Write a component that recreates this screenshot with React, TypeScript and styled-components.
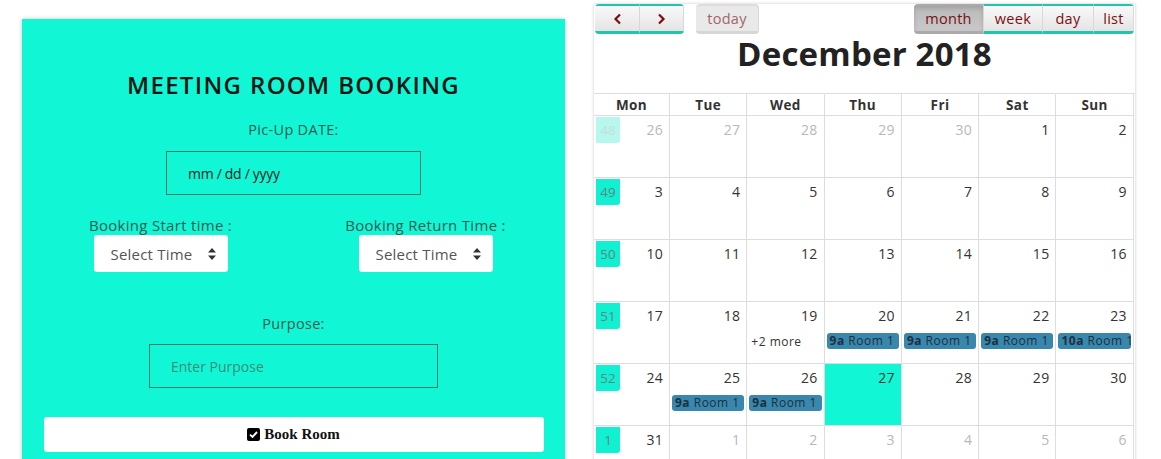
import React from "react";
import styled, { createGlobalStyle } from "styled-components";

const Global = createGlobalStyle`
  html, body { margin: 0; padding: 0; background: #fff; overflow: hidden; }
  body { font-family: "Open Sans", "DejaVu Sans", sans-serif; }
  * { box-sizing: border-box; }
`;

const Page = styled.div`
  display: flex;
  align-items: flex-start;
  width: 1161px;
  height: 459px;
  overflow: hidden;
`;

const Card = styled.div`
  margin: 19px 0 0 22px;
  width: 543px;
  height: 470px;
  background: #11f7d5;
  box-shadow: 0 0 4px rgba(0, 0, 0, 0.25);
  display: flex;
  flex-direction: column;
  align-items: center;
  padding-top: 51px;
`;

const Title = styled.h1`
  margin: 0;
  font-size: 24px;
  font-weight: 600;
  letter-spacing: 1.35px;
  color: #0b1512;
  line-height: 30px;
`;

const Label = styled.div<{ $mt: number }>`
  margin-top: ${(p) => p.$mt}px;
  font-size: 14.5px;
  color: #2a5b53;
  line-height: 20px;
  letter-spacing: 0.3px;
`;

const TextBox = styled.div<{ $w: number; $mt: number; $placeholder?: boolean }>`
  margin-top: ${(p) => p.$mt}px;
  width: ${(p) => p.$w}px;
  height: 44px;
  border: 1px solid #2b7a6c;
  display: flex;
  align-items: center;
  padding-left: 21px;
  font-size: 14px;
  color: ${(p) => (p.$placeholder ? "#3b8c7d" : "#1d2522")};
  letter-spacing: ${(p) => (p.$placeholder ? "0" : "-0.3px")};
`;

const TimeRow = styled.div`
  margin-top: 20px;
  width: 100%;
  display: grid;
  grid-template-columns: 265px 265px;
  padding-left: 6px;
`;

const TimeCol = styled.div`
  display: flex;
  flex-direction: column;
  align-items: center;
`;

const TimeLabel = styled.div`
  font-size: 15px;
  color: #2a5b53;
  line-height: 20px;
  letter-spacing: 0.3px;
`;

const Select = styled.div`
  margin-top: 0;
  width: 134px;
  height: 37px;
  background: #fff;
  border-radius: 3px;
  display: flex;
  align-items: center;
  justify-content: space-between;
  padding: 0 12px 0 17px;
  font-size: 15px;
  color: #555;
  letter-spacing: 0.2px;
`;

const Arrows = styled.svg`
  width: 8px;
  height: 12px;
`;

const BookButton = styled.div`
  margin-top: 29px;
  width: 500px;
  height: 35px;
  background: #fff;
  border-radius: 3px;
  display: flex;
  align-items: center;
  justify-content: center;
  gap: 4px;
  font-family: "Liberation Serif", "Times New Roman", serif;
  font-weight: 700;
  font-size: 15px;
  color: #111;
`;

/* Calendar */

const Calendar = styled.div`
  margin: 4px 0 0 29px;
  width: 541px;
  height: 470px;
  box-shadow: 0 0 3px rgba(0, 0, 0, 0.22);
  display: flex;
  flex-direction: column;
`;

const Toolbar = styled.div`
  display: flex;
  justify-content: space-between;
  align-items: flex-start;
  padding: 0 1px;
  height: 30px;
`;

const ToolLeft = styled.div`
  display: flex;
  gap: 12px;
`;

const Group = styled.div`
  display: flex;
  border-radius: 4px;
  overflow: hidden;
`;

const Btn = styled.div<{ $w: number; $active?: boolean; $teal?: boolean; $disabled?: boolean }>`
  width: ${(p) => p.$w}px;
  height: 30px;
  display: flex;
  align-items: center;
  justify-content: center;
  font-size: 14.5px;
  letter-spacing: 0.3px;
  color: ${(p) => (p.$disabled ? "#a0666a" : "#7a0f12")};
  background: ${(p) =>
    p.$active
      ? "linear-gradient(#b9b9b9, #c9c9c9)"
      : p.$disabled
      ? "#e9e9e9"
      : "linear-gradient(#f9f9f9, #e4e4e4)"};
  border-top: 2px solid ${(p) => (p.$teal ? "#1fc6ab" : p.$active ? "#aaa" : "#ddd")};
  border-bottom: 3px solid ${(p) => (p.$teal ? "#1fc6ab" : p.$active ? "#aaa" : "#d6d6d6")};
  border-right: 1px solid #d8d8d8;
  box-shadow: ${(p) => (p.$active ? "inset 0 2px 4px rgba(0,0,0,0.15)" : "none")};
  border-radius: ${(p) => (p.$disabled ? "4px" : "0")};
`;

const Chevron = styled.svg`
  width: 9px;
  height: 12px;
`;

const MonthTitle = styled.h2`
  margin: 0;
  text-align: center;
  font-size: 33px;
  font-weight: 700;
  color: #222;
  line-height: 40px;
  letter-spacing: 0.2px;
`;

const Grid = styled.div`
  margin-top: 19px;
  display: grid;
  grid-template-columns: 76px repeat(6, 77.3px);
  border-top: 1px solid #ddd;
`;

const HeadCell = styled.div`
  height: 22px;
  display: flex;
  align-items: center;
  justify-content: center;
  font-size: 13.5px;
  font-weight: 700;
  color: #333;
  border-right: 1px solid #ddd;
  border-bottom: 1px solid #ddd;
  letter-spacing: 0.4px;
`;

const DayCell = styled.div<{ $today?: boolean }>`
  position: relative;
  height: 62px;
  border-right: 1px solid #ddd;
  border-bottom: 1px solid #ddd;
  background: ${(p) => (p.$today ? "#11f7d5" : "transparent")};
  display: flex;
  flex-direction: column;
`;

const DayNum = styled.div<{ $other?: boolean }>`
  text-align: right;
  padding: 5px 6px 0 0;
  font-size: 14px;
  line-height: 18px;
  color: ${(p) => (p.$other ? "#b8b8b8" : "#333")};
  letter-spacing: 0.3px;
`;

const WeekNum = styled.div<{ $faded?: boolean }>`
  position: absolute;
  left: 2px;
  top: 1px;
  width: 24px;
  height: 26px;
  background: ${(p) => (p.$faded ? "#b6f8ee" : "#11f1d2")};
  color: ${(p) => (p.$faded ? "#c9dcd8" : "#5d8780")};
  border-radius: 0 0 3px 0;
  font-size: 13.5px;
  display: flex;
  align-items: center;
  justify-content: center;
`;

const Event = styled.div`
  margin: 8px 2px 0 2px;
  height: 16px;
  background: #3a87ad;
  border-radius: 3px;
  font-size: 12px;
  line-height: 16px;
  color: #1c3040;
  padding-left: 3px;
  white-space: nowrap;
  overflow: hidden;
  letter-spacing: 0.5px;
  b { font-weight: 700; }
`;

const More = styled.div`
  margin: 8px 0 0 4px;
  font-size: 12px;
  color: #333;
  letter-spacing: 0.5px;
`;

type Day = { n: number; other?: boolean; today?: boolean; ev?: string; more?: string };

const weeks: { wk: number; faded?: boolean; days: Day[] }[] = [
  {
    wk: 48,
    faded: true,
    days: [
      { n: 26, other: true },
      { n: 27, other: true },
      { n: 28, other: true },
      { n: 29, other: true },
      { n: 30, other: true },
      { n: 1 },
      { n: 2 },
    ],
  },
  { wk: 49, days: [3, 4, 5, 6, 7, 8, 9].map((n) => ({ n })) },
  { wk: 50, days: [10, 11, 12, 13, 14, 15, 16].map((n) => ({ n })) },
  {
    wk: 51,
    days: [
      { n: 17 },
      { n: 18 },
      { n: 19, more: "+2 more" },
      { n: 20, ev: "9a" },
      { n: 21, ev: "9a" },
      { n: 22, ev: "9a" },
      { n: 23, ev: "10a" },
    ],
  },
  {
    wk: 52,
    days: [
      { n: 24 },
      { n: 25, ev: "9a" },
      { n: 26, ev: "9a" },
      { n: 27, today: true },
      { n: 28 },
      { n: 29 },
      { n: 30 },
    ],
  },
  {
    wk: 1,
    days: [
      { n: 31 },
      { n: 1, other: true },
      { n: 2, other: true },
      { n: 3, other: true },
      { n: 4, other: true },
      { n: 5, other: true },
      { n: 6, other: true },
    ],
  },
];

const heads = ["Mon", "Tue", "Wed", "Thu", "Fri", "Sat", "Sun"];

const SortIcon = () => (
  <Arrows viewBox="0 0 8 12">
    <path d="M4 0 L8 4.5 H0 Z M4 12 L8 7.5 H0 Z" fill="#333" />
  </Arrows>
);

const CheckSquare = () => (
  <svg width="13" height="13" viewBox="0 0 13 13">
    <rect x="0" y="0" width="13" height="13" rx="2" fill="#000" />
    <path d="M3 6.6 L5.5 9 L10 4" stroke="#fff" strokeWidth="1.9" fill="none" />
  </svg>
);

const Prev = () => (
  <Chevron viewBox="0 0 9 12">
    <path d="M7 1.5 L2.5 6 L7 10.5" stroke="#7a0f12" strokeWidth="2.2" fill="none" />
  </Chevron>
);
const Next = () => (
  <Chevron viewBox="0 0 9 12">
    <path d="M2 1.5 L6.5 6 L2 10.5" stroke="#7a0f12" strokeWidth="2.2" fill="none" />
  </Chevron>
);

export default function App() {
  return (
    <>
      <Global />
      <Page>
        <Card>
          <Title>MEETING ROOM BOOKING</Title>
          <Label $mt={20}>Pic-Up DATE:</Label>
          <TextBox $w={255} $mt={11}>mm / dd / yyyy</TextBox>
          <TimeRow>
            <TimeCol>
              <TimeLabel>Booking Start time :</TimeLabel>
              <Select>
                Select Time <SortIcon />
              </Select>
            </TimeCol>
            <TimeCol>
              <TimeLabel>Booking Return Time :</TimeLabel>
              <Select>
                Select Time <SortIcon />
              </Select>
            </TimeCol>
          </TimeRow>
          <Label $mt={42}>Purpose:</Label>
          <TextBox $w={289} $mt={10} $placeholder>
            Enter Purpose
          </TextBox>
          <BookButton>
            <CheckSquare /> Book Room
          </BookButton>
        </Card>

        <Calendar>
          <Toolbar>
            <ToolLeft>
              <Group>
                <Btn $w={45} $teal>
                  <Prev />
                </Btn>
                <Btn $w={44} $teal>
                  <Next />
                </Btn>
              </Group>
              <Btn $w={63} $disabled>
                today
              </Btn>
            </ToolLeft>
            <Group>
              <Btn $w={70} $active>
                month
              </Btn>
              <Btn $w={59} $teal>
                week
              </Btn>
              <Btn $w={51} $teal>
                day
              </Btn>
              <Btn $w={40} $teal>
                list
              </Btn>
            </Group>
          </Toolbar>
          <MonthTitle>December 2018</MonthTitle>
          <Grid>
            {heads.map((h) => (
              <HeadCell key={h}>{h}</HeadCell>
            ))}
            {weeks.map((w) =>
              w.days.map((d, i) => (
                <DayCell key={`${w.wk}-${i}`} $today={d.today}>
                  {i === 0 && <WeekNum $faded={w.faded}>{w.wk}</WeekNum>}
                  <DayNum $other={d.other}>{d.n}</DayNum>
                  {d.ev && (
                    <Event>
                      <b>{d.ev}</b> Room 1
                    </Event>
                  )}
                  {d.more && <More>{d.more}</More>}
                </DayCell>
              ))
            )}
          </Grid>
        </Calendar>
      </Page>
    </>
  );
}
